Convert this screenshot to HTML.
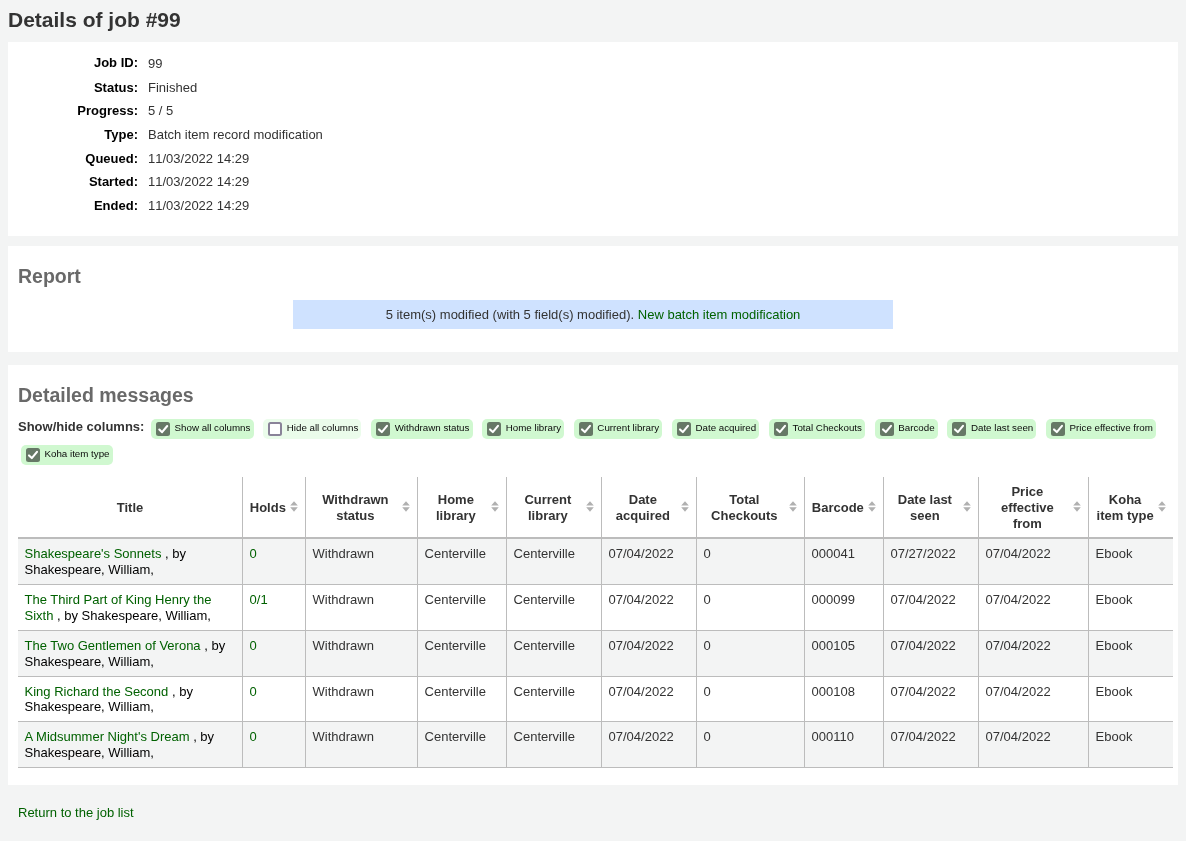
<!DOCTYPE html>
<html lang="en">
<head>
<meta charset="utf-8">
<title>Details of job #99</title>
<style>
*{box-sizing:border-box}
html,body{margin:0;padding:0}
body{width:1186px;height:841px;overflow:hidden;will-change:transform;background:#f3f4f4;font-family:"Liberation Sans",Arial,sans-serif;font-size:13px;color:#000;line-height:1.2}
a{color:#006100;text-decoration:none}
h1{position:absolute;left:8px;top:8px;margin:0;font-size:21px;line-height:24px;font-weight:bold;color:#333}
.page-section{position:absolute;left:8px;width:1170px;background:#fff}
#s1{top:42px;height:194px}
#s2{top:246px;height:106px}
#s3{top:365px;height:420px}
h2{margin:0;font-size:19.5px;font-weight:bold;color:#696969;position:absolute;left:10px}
ol.rows{list-style:none;margin:0;padding:0;position:absolute;left:0;top:9px}
ol.rows li{position:absolute;left:0;width:900px;height:23.7px;display:flex;align-items:center;color:#333}
ol.rows li .label{width:130px;text-align:right;font-weight:bold;color:#000;margin-right:10px}
.dialog{position:absolute;left:285px;top:54px;width:600px;height:29px;background:#cfe2ff;text-align:center;line-height:29px;color:#333;font-size:13px}

p.cols{position:absolute;left:10px;top:52.44px;width:1150px;margin:0;line-height:26px;font-size:13px;color:#333}
p.cols strong{color:#333;position:relative;top:-3.44px}
p.cols label{display:inline-block;vertical-align:middle;height:20px;line-height:18px;margin:0 3.13px 2px 3px;padding:0 3.1px 0 5px;border-radius:5px;background:#d0f8d0;font-size:9.75px;color:#0a0a0a;white-space:nowrap;position:relative;top:-1px}
p.cols label.off{background:#ebfceb}
p.cols label i{display:inline-block;vertical-align:middle;width:14px;height:14px;border-radius:2.5px;background:#667866;margin:0 4.5px 0 0;position:relative;top:0.5px}
p.cols label.off i{background:#fff;border:2px solid #8a8399;border-radius:2.5px}
p.cols label i svg{position:absolute;left:0;top:0;width:14px;height:14px}
table{position:absolute;left:10px;top:112px;border-collapse:collapse;table-layout:fixed;width:1155px;font-size:13px;line-height:16px}
th{border-right:1px solid #bcbcbc;border-bottom:2px solid #bcbcbc;padding:6.5px 18.5px 4.5px 7px;text-align:center;font-weight:bold;color:#333;vertical-align:middle;height:61px;position:relative}
th.nosort{padding-right:6.5px}
th svg{position:absolute;right:7px;top:24.2px;width:8px;height:11px}
td{border-right:1px solid #bcbcbc;border-bottom:1px solid #bcbcbc;padding:6.5px 6.5px 5px;vertical-align:top;color:#333}
td.t{color:#000}
th:last-child,td:last-child{border-right:0}
td+td{padding-left:7.05px}
tbody tr+tr td{padding-top:7.5px;padding-bottom:4px}
tbody tr:nth-child(4) td{line-height:15px;padding-top:7.4px}
th+th{padding-left:7.1px;padding-right:18.4px}
tbody tr:nth-child(odd) td{background:#f3f4f4}
</style>
</head>
<body>
<h1>Details of job #99</h1>
<div class="page-section" id="s1">
<ol class="rows">
<li style="top:0px"><span class="label">Job ID:</span><span style="position:relative;top:1px">99</span></li>
<li style="top:25px"><span class="label">Status:</span><span>Finished</span></li>
<li style="top:48px"><span class="label">Progress:</span><span>5 / 5</span></li>
<li style="top:72px"><span class="label">Type:</span><span>Batch item record modification</span></li>
<li style="top:96px"><span class="label">Queued:</span><span><span style="font-kerning:none">11</span>/03/2022 14:29</span></li>
<li style="top:119px"><span class="label">Started:</span><span><span style="font-kerning:none">11</span>/03/2022 14:29</span></li>
<li style="top:143px"><span class="label">Ended:</span><span><span style="font-kerning:none">11</span>/03/2022 14:29</span></li>
</ol>
</div>
<div class="page-section" id="s2">
<h2 style="top:19px">Report</h2>
<div class="dialog">5 item(s) modified (with 5 field(s) modified). <a href="#">New batch item modification</a></div>
</div>
<div class="page-section" id="s3">
<h2 style="top:19px">Detailed messages</h2>
<p class="cols"><strong>Show/hide columns:</strong> <label><i><svg viewBox="0 0 14 14"><path d="M3.3 7.5 L6.1 10.2 L11.2 4" fill="none" stroke="#fff" stroke-width="2.1" stroke-linecap="round" stroke-linejoin="round"/></svg></i>Show all columns</label> <label class="off"><i></i>Hide all columns</label> <label><i><svg viewBox="0 0 14 14"><path d="M3 7.4 L5.8 10.1 L11 3.9" fill="none" stroke="#fff" stroke-width="2.1" stroke-linecap="round" stroke-linejoin="round"/></svg></i>Withdrawn status</label> <label><i><svg viewBox="0 0 14 14"><path d="M3 7.4 L5.8 10.1 L11 3.9" fill="none" stroke="#fff" stroke-width="2.1" stroke-linecap="round" stroke-linejoin="round"/></svg></i>Home library</label> <label><i><svg viewBox="0 0 14 14"><path d="M3 7.4 L5.8 10.1 L11 3.9" fill="none" stroke="#fff" stroke-width="2.1" stroke-linecap="round" stroke-linejoin="round"/></svg></i>Current library</label> <label><i><svg viewBox="0 0 14 14"><path d="M3 7.4 L5.8 10.1 L11 3.9" fill="none" stroke="#fff" stroke-width="2.1" stroke-linecap="round" stroke-linejoin="round"/></svg></i>Date acquired</label> <label><i><svg viewBox="0 0 14 14"><path d="M3 7.4 L5.8 10.1 L11 3.9" fill="none" stroke="#fff" stroke-width="2.1" stroke-linecap="round" stroke-linejoin="round"/></svg></i>Total Checkouts</label> <label><i><svg viewBox="0 0 14 14"><path d="M3 7.4 L5.8 10.1 L11 3.9" fill="none" stroke="#fff" stroke-width="2.1" stroke-linecap="round" stroke-linejoin="round"/></svg></i>Barcode</label> <label><i><svg viewBox="0 0 14 14"><path d="M3 7.4 L5.8 10.1 L11 3.9" fill="none" stroke="#fff" stroke-width="2.1" stroke-linecap="round" stroke-linejoin="round"/></svg></i>Date last seen</label> <label><i><svg viewBox="0 0 14 14"><path d="M3 7.4 L5.8 10.1 L11 3.9" fill="none" stroke="#fff" stroke-width="2.1" stroke-linecap="round" stroke-linejoin="round"/></svg></i>Price effective from</label> <label><i><svg viewBox="0 0 14 14"><path d="M3 7.4 L5.8 10.1 L11 3.9" fill="none" stroke="#fff" stroke-width="2.1" stroke-linecap="round" stroke-linejoin="round"/></svg></i>Koha item type</label></p>
<table><colgroup><col style="width:224px"><col style="width:63px"><col style="width:112px"><col style="width:89px"><col style="width:95px"><col style="width:95px"><col style="width:108px"><col style="width:79px"><col style="width:95px"><col style="width:110px"><col style="width:85px"></colgroup><thead><tr><th class="nosort">Title</th><th>Holds<svg viewBox="0 0 8 11"><path d="M4 0.3 L7.8 4.6 H0.2 Z M0.2 6.2 H7.8 L4 10.7 Z" fill="#b0b0b0"/></svg></th><th>Withdrawn status<svg viewBox="0 0 8 11"><path d="M4 0.3 L7.8 4.6 H0.2 Z M0.2 6.2 H7.8 L4 10.7 Z" fill="#b0b0b0"/></svg></th><th>Home library<svg viewBox="0 0 8 11"><path d="M4 0.3 L7.8 4.6 H0.2 Z M0.2 6.2 H7.8 L4 10.7 Z" fill="#b0b0b0"/></svg></th><th>Current library<svg viewBox="0 0 8 11"><path d="M4 0.3 L7.8 4.6 H0.2 Z M0.2 6.2 H7.8 L4 10.7 Z" fill="#b0b0b0"/></svg></th><th>Date acquired<svg viewBox="0 0 8 11"><path d="M4 0.3 L7.8 4.6 H0.2 Z M0.2 6.2 H7.8 L4 10.7 Z" fill="#b0b0b0"/></svg></th><th>Total Checkouts<svg viewBox="0 0 8 11"><path d="M4 0.3 L7.8 4.6 H0.2 Z M0.2 6.2 H7.8 L4 10.7 Z" fill="#b0b0b0"/></svg></th><th>Barcode<svg viewBox="0 0 8 11"><path d="M4 0.3 L7.8 4.6 H0.2 Z M0.2 6.2 H7.8 L4 10.7 Z" fill="#b0b0b0"/></svg></th><th>Date last seen<svg viewBox="0 0 8 11"><path d="M4 0.3 L7.8 4.6 H0.2 Z M0.2 6.2 H7.8 L4 10.7 Z" fill="#b0b0b0"/></svg></th><th>Price effective from<svg viewBox="0 0 8 11"><path d="M4 0.3 L7.8 4.6 H0.2 Z M0.2 6.2 H7.8 L4 10.7 Z" fill="#b0b0b0"/></svg></th><th>Koha item type<svg viewBox="0 0 8 11"><path d="M4 0.3 L7.8 4.6 H0.2 Z M0.2 6.2 H7.8 L4 10.7 Z" fill="#b0b0b0"/></svg></th></tr></thead><tbody><tr style="height:46px"><td class="t"><a href="#">Shakespeare's Sonnets</a> , by Shakespeare, William,</td><td><a href="#">0</a></td><td>Withdrawn</td><td>Centerville</td><td>Centerville</td><td>07/04/2022</td><td>0</td><td>000041</td><td>07/27/2022</td><td>07/04/2022</td><td>Ebook</td></tr>
<tr style="height:46px"><td class="t"><a href="#">The Third Part of King Henry the Sixth</a> , by Shakespeare, William,</td><td><a href="#">0/1</a></td><td>Withdrawn</td><td>Centerville</td><td>Centerville</td><td>07/04/2022</td><td>0</td><td>000099</td><td>07/04/2022</td><td>07/04/2022</td><td>Ebook</td></tr>
<tr style="height:46px"><td class="t"><a href="#">The Two Gentlemen of Verona</a> , by Shakespeare, William,</td><td><a href="#">0</a></td><td>Withdrawn</td><td>Centerville</td><td>Centerville</td><td>07/04/2022</td><td>0</td><td>000105</td><td>07/04/2022</td><td>07/04/2022</td><td>Ebook</td></tr>
<tr style="height:45px"><td class="t"><a href="#">King Richard the Second</a> , by Shakespeare, William,</td><td><a href="#">0</a></td><td>Withdrawn</td><td>Centerville</td><td>Centerville</td><td>07/04/2022</td><td>0</td><td>000108</td><td>07/04/2022</td><td>07/04/2022</td><td>Ebook</td></tr>
<tr style="height:46px"><td class="t"><a href="#">A Midsummer Night's Dream</a> , by Shakespeare, William,</td><td><a href="#">0</a></td><td>Withdrawn</td><td>Centerville</td><td>Centerville</td><td>07/04/2022</td><td>0</td><td>000110</td><td>07/04/2022</td><td>07/04/2022</td><td>Ebook</td></tr>
</tbody></table>
</div>
<a href="#" style="position:absolute;left:18px;top:805px">Return to the job list</a>
</body>
</html>
